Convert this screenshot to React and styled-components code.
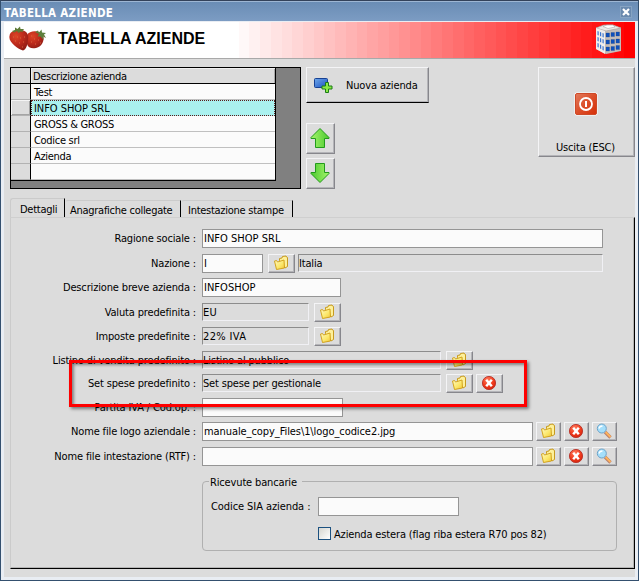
import React from "react";
import styled, { createGlobalStyle, css } from "styled-components";

const companies = ["Test", "INFO SHOP SRL", "GROSS & GROSS", "Codice srl", "Azienda", ""];

const BANDS = 38;
const bands = Array.from({ length: BANDS }, (_, i) => {
  const c = Math.round(255 * (1 - i / (BANDS - 1)));
  const from = ((i / BANDS) * 100).toFixed(2);
  const to = (((i + 1) / BANDS) * 100).toFixed(2);
  return `rgb(255, ${c}, ${c}) ${from}% ${to}%`;
}).join(", ");

const App = () => {
  return (
    <Window>
      <GlobalStyle />
      <TitleBar>
        <TitleText>TABELLA AZIENDE</TitleText>
        <CloseButton>
          <CloseIcon />
        </CloseButton>
      </TitleBar>
      <Content>
        <Banner>
          <Strawberries />
          <Heading>TABELLA AZIENDE</Heading>
          <Building />
        </Banner>
        <Toolbar>
          <GridBox>
            <Grid>
              <GridRow>
                <RowHead $header />
                <HeadCell>Descrizione azienda</HeadCell>
              </GridRow>
              {companies.map((name, i) => (
                <GridRow key={i}>
                  <RowHead $active={i === 1} />
                  <Cell $active={i === 1}>{name}</Cell>
                </GridRow>
              ))}
            </Grid>
          </GridBox>
          <Actions>
            <NewButton>
              <AddIcon />
              <NewText>Nuova azienda</NewText>
            </NewButton>
            <ArrowButton>
              <ArrowIcon />
            </ArrowButton>
            <ArrowButton $second>
              <ArrowIcon $down />
            </ArrowButton>
          </Actions>
          <ExitButton>
            <PowerIcon />
            <span>Uscita (ESC)</span>
          </ExitButton>
        </Toolbar>
        <Tabs>
          <Tab $active $width={55}>Dettagli</Tab>
          <Tab $width={116}>Anagrafiche collegate</Tab>
          <Tab $width={112} $inset={6}>Intestazione stampe</Tab>
        </Tabs>
        <Panel>
          <Field label="Ragione sociale :" top={11}>
            <Input $width={401} $caps>INFO SHOP SRL</Input>
          </Field>
          <Field label="Nazione :" top={6}>
            <Input $width={61}>I</Input>
            <IconButton $left={5}><FolderIcon /></IconButton>
            <ReadOnly $width={305} $left={3}>Italia</ReadOnly>
          </Field>
          <Field label="Descrizione breve azienda :" top={5}>
            <Input $width={139} $caps>INFOSHOP</Input>
          </Field>
          <Field label="Valuta predefinita :" top={6}>
            <ReadOnly $width={107} $caps>EU</ReadOnly>
            <IconButton $left={5}><FolderIcon /></IconButton>
          </Field>
          <Field label="Imposte predefinite :" top={5}>
            <ReadOnly $width={107} $caps>22% IVA</ReadOnly>
            <IconButton $left={5}><FolderIcon /></IconButton>
          </Field>
          <Field label="Listino di vendita predefinito :" top={5}>
            <ReadOnly $width={239}>Listino al pubblico</ReadOnly>
            <IconButton $left={5}><FolderIcon /></IconButton>
          </Field>
          <Field label="Set spese predefinito :" top={4}>
            <ReadOnly $width={239}>Set spese per gestionale</ReadOnly>
            <IconButton $left={5}><FolderIcon /></IconButton>
            <IconButton $left={3}><DeleteIcon /></IconButton>
          </Field>
          <Field label="Partita IVA / Cod.op. :" top={5}>
            <Input $width={141} />
          </Field>
          <Field label="Nome file logo aziendale :" top={5}>
            <Input $width={331}>manuale_copy_Files\1\logo_codice2.jpg</Input>
            <FileButtons />
          </Field>
          <Field label="Nome file intestazione (RTF) :" top={6}>
            <Input $width={331} />
            <FileButtons />
          </Field>
          <Group>
            <Legend>Ricevute bancarie</Legend>
            <GroupRow>
              <GroupLabel>Codice SIA azienda :</GroupLabel>
              <Input $width={141} />
            </GroupRow>
            <CheckRow>
              <CheckBox />
              Azienda estera (flag riba estera R70 pos 82)
            </CheckRow>
          </Group>
        </Panel>
      </Content>
      <Highlight />
    </Window>
  );
};

const Field = ({ label, top, children }) => (
  <Row $top={top}>
    <Label>{label}</Label>
    {children}
  </Row>
);

const FileButtons = () => (
  <>
    <IconButton $left={3} $small><FolderIcon /></IconButton>
    <IconButton $left={3} $small><DeleteIcon /></IconButton>
    <IconButton $left={3} $small><SearchIcon /></IconButton>
  </>
);

const CloseIcon = () => (
  <svg width="8" height="8" viewBox="0 0 8 8">
    <path d="M1 1L7 7M7 1L1 7" stroke="#fff" strokeWidth="2.2" />
  </svg>
);

const Strawberries = () => (
  <svg width="38" height="26" viewBox="0 0 38 26">
    <defs>
      <radialGradient id="berry" cx=".35" cy=".3" r=".8">
        <stop offset="0" stopColor="#dc4526" />
        <stop offset=".5" stopColor="#bd2a1c" />
        <stop offset="1" stopColor="#8a1a14" />
      </radialGradient>
    </defs>
    <path d="M18 9C21 4 30 4 34 9C36 14 33 21 27 22C23 23 19 22 18 18Z" fill="url(#berry)" />
    <path d="M.5 10C1 5 6 4 11 4C17 4 20 8 19 13C19 18 17 24 14 24.500C9 23 -1 16 .5 10Z" fill="url(#berry)" />
    <path d="M3 5L6 4L6 1.500L8.500 3L11 .5L11.500 3L15 3L13.500 5L15 6L11.500 5.500L9.500 7L8 5L5 6.500Z" fill="#5d7a35" />
    <path d="M26 6L29 4.500L30 6.500L32.500 3.500L33 6.500L37 7L35 8.500L37 12L34 10.500L34.500 14L31.500 10.500L28.500 10.500L30 8Z" fill="#5d7f3c" />
    <path
      d="M4 11h1M8 11h1M6 15h1M11 12h1M10 17h1M15 11h1M14 16h1M13 21h1M22 10h1M25 13h1M22 16h1M29 14h1M26 18h1M31 17h1"
      stroke="#d9653f"
      strokeWidth="1"
    />
  </svg>
);

const Building = () => (
  <BuildingSvg width="28" height="31" viewBox="0 0 28 31">
    <path d="M1 4L9 1L18 1L26 4L26 27L11 30L1 25Z" fill="#c3bdb9" />
    <path d="M1 4L9 1L18 1L26 4L11 7Z" fill="#ece9e6" stroke="#aaa39f" strokeWidth=".7" />
    <path d="M8 2.500L12 1H18L20 3L13 4.500Z" fill="#fff" stroke="#aaa" strokeWidth=".6" />
    <path d="M1 4L10 7V30L1 25Z" fill="#efedeb" />
    <g fill="#0d50bd" stroke="#29487e" strokeWidth=".3">
      <path d="M11 9h3.500v4h-3.500zM16 8.500h3.500v4h-3.500zM21 8h3.500v4h-3.500z" />
      <path d="M11 16h3.500v4h-3.500zM16 15.500h3.500v4h-3.500zM21 15h3.500v4h-3.500z" />
      <path d="M11 23h3.500v4h-3.500zM16 22.500h3.500v4h-3.500zM21 21.500h3.500v4h-3.500z" />
    </g>
    <g fill="#3a74cf">
      <path d="M2.500 7l1.200.5v4l-1.200-.5zM5 8l1.200.5v4l-1.200-.5zM7.500 9l1.200.5v4l-1.200-.5z" />
      <path d="M2.500 13l1.200.5v4l-1.200-.5zM5 14l1.200.5v4l-1.200-.5zM7.500 15l1.200.5v4l-1.200-.5z" />
      <path d="M2.500 19l1.200.5v4l-1.200-.5zM5 20.500l1.200.5v4l-1.200-.5zM7.500 22l1.200.5v4l-1.200-.5z" />
    </g>
  </BuildingSvg>
);

const AddIcon = () => (
  <svg width="20" height="16" viewBox="0 0 20 16">
    <defs>
      <linearGradient id="screen" x1="0" y1="0" x2="1" y2="1">
        <stop offset="0" stopColor="#6fa8ea" />
        <stop offset="1" stopColor="#1b52c2" />
      </linearGradient>
    </defs>
    <rect x=".5" y="1.500" width="13" height="9" rx="1" fill="url(#screen)" stroke="#174193" />
    <path d="M11.500 5.500h3v3.500h3.500v3h-3.500v3.500h-3v-3.500h-3.500v-3h3.500z" fill="#8bea45" stroke="#1c7d17" />
  </svg>
);

const ArrowIcon = ({ $down }) => (
  <svg width="22" height="22" viewBox="0 0 22 22">
    <defs>
      <linearGradient id="leaf" x1="0" x2="1">
        <stop offset="0" stopColor="#a4f56c" />
        <stop offset="1" stopColor="#4cc92e" />
      </linearGradient>
    </defs>
    <path
      d="M11 1.500L20 10.500V11.500H15.500V20.500H6.500V11.500H2V10.500Z"
      transform={$down ? "rotate(180 11 11)" : undefined}
      fill="url(#leaf)"
      stroke="#229a1b"
    />
  </svg>
);

const PowerIcon = () => (
  <svg width="24" height="24" viewBox="0 0 24 24">
    <defs>
      <linearGradient id="power" x1="0" y1="0" x2="1" y2="1">
        <stop offset="0" stopColor="#e27b5d" />
        <stop offset=".5" stopColor="#dc4f2a" />
        <stop offset="1" stopColor="#d62f08" />
      </linearGradient>
    </defs>
    <rect x=".5" y=".5" width="23" height="23" rx="2" fill="#fff" />
    <rect x="1.500" y="1.500" width="21" height="21" rx="1.500" fill="url(#power)" stroke="#cf4a28" />
    <circle cx="12" cy="12" r="6" fill="none" stroke="#fff" strokeWidth="1.800" />
    <path d="M12 9V15" stroke="#fff" strokeWidth="2" />
  </svg>
);

const FolderIcon = () => (
  <svg width="16" height="16" viewBox="0 0 16 16">
    <defs>
      <linearGradient id="folder" x1="0" y1="0" x2="1" y2="1">
        <stop offset="0" stopColor="#fffbc4" />
        <stop offset=".6" stopColor="#fbe667" />
        <stop offset="1" stopColor="#f0c23a" />
      </linearGradient>
    </defs>
    <path
      d="M6.500 5.500V3.500L9 3L9.500 1.500L13 1L13.500 2L14.500 2.500V11.500L12 13Z"
      fill="#fdf09a"
      stroke="#c3920f"
      strokeWidth=".9"
    />
    <path
      d="M1.500 6L3.500 5.500L4.500 7L11 5L11.500 13L3.500 14.500Z"
      fill="url(#folder)"
      stroke="#cf9c12"
      strokeWidth=".9"
    />
  </svg>
);

const DeleteIcon = () => (
  <svg width="16" height="16" viewBox="0 0 16 16">
    <defs>
      <radialGradient id="stop" cx=".4" cy=".25" r=".8">
        <stop offset="0" stopColor="#ff7a5c" />
        <stop offset=".6" stopColor="#f03a1c" />
        <stop offset="1" stopColor="#d3230c" />
      </radialGradient>
    </defs>
    <circle cx="8" cy="8" r="6.600" fill="url(#stop)" stroke="#b8322a" strokeWidth=".9" />
    <path d="M5.200 4.800L10.800 11.200M10.800 4.800L5.200 11.200" stroke="#fff" strokeWidth="2.500" />
  </svg>
);

const SearchIcon = () => (
  <svg width="16" height="16" viewBox="0 0 16 16">
    <path d="M9 9L14.500 14.500" stroke="#b9816d" strokeWidth="3.400" />
    <path d="M9.500 9L14.500 14" stroke="#ffb25a" strokeWidth="1.800" />
    <circle cx="5.800" cy="5.500" r="4.500" fill="#a5dffb" stroke="#6fa3c8" />
    <path d="M3 5.500Q3.500 3 6.500 3" stroke="#fff" strokeWidth="1.300" fill="none" />
  </svg>
);

export default App;

const GlobalStyle = createGlobalStyle`
  * {
    box-sizing: border-box;
  }
  body {
    margin: 0;
    overflow: hidden;
  }
  svg {
    display: block;
    flex: none;
  }
`;

const raised = css`
  background: #dcdcdc;
  border: 1px solid;
  border-color: #f4f4f6 #87878c #87878c #f4f4f6;
  box-shadow: inset -1px -1px 0 #b4b4b8;
`;

const Window = styled.div`
  position: relative;
  width: 639px;
  height: 581px;
  display: flex;
  flex-direction: column;
  border: 1px solid #34506f;
  border-top-color: #33425a;
  background: #e9edf3;
  color: #000;
  font-family: "DejaVu Sans Condensed", "DejaVu Sans", sans-serif;
  font-stretch: condensed;
  font-size: 11px;
  letter-spacing: -0.15px;
  line-height: 13px;
  white-space: nowrap;
`;

const TitleBar = styled.div`
  height: 20px;
  padding: 3px 6px 0 3px;
  display: flex;
  justify-content: space-between;
  border-top: 1px solid #9db6d3;
  background: linear-gradient(#6a8db5, #7c9cc3);
`;

const TitleText = styled.div`
  padding-top: 2px;
  color: #fff;
  font-size: 11.5px;
  font-weight: bold;
  letter-spacing: 0.3px;
`;

const CloseButton = styled.div`
  width: 12px;
  height: 12px;
  margin-top: 1px;
  display: flex;
  align-items: center;
  justify-content: center;
  border: 1px solid #86a3c2;
  background: #6989ae;
`;

const Content = styled.div`
  flex: 1;
  margin: 1px 3px 3px 3px;
  background: #dcdcdc;
`;

const Banner = styled.div`
  height: 37px;
  padding: 4px 12px 0 5px;
  display: flex;
  align-items: flex-start;
  border-bottom: 1px solid #a9a9a9;
  background: linear-gradient(to right, ${bands}) right / 407px 100% no-repeat #fff;
`;

const BuildingSvg = styled.svg`
  margin-top: -2px;
`;

const Heading = styled.h1`
  flex: 1;
  margin: 3px 0 0 11px;
  font: bold 16px/20px "Liberation Sans", Arial, sans-serif;
  letter-spacing: 0.02px;
`;

const Toolbar = styled.div`
  display: flex;
  align-items: flex-start;
  height: 139px;
  padding: 8px 0 0 6px;
`;

const GridBox = styled.div`
  width: 291px;
  height: 122px;
  border: 1px solid #000;
  background: #808080;
  letter-spacing: -0.3px;
`;

const Grid = styled.div`
  width: 265px;
  border-right: 1px solid #000;
  border-bottom: 1px solid #000;
`;

const GridRow = styled.div`
  display: flex;
  height: 16px;
`;

const RowHead = styled.div`
  width: 20px;
  background: #dcdcdc;
  border-right: 1px solid #000;
  border-bottom: 1px solid ${p => (p.$header ? "#000" : "#b2b2b2")};
  box-shadow: ${p => (p.$active ? "inset 1px 1px 0 #f4f4f4, inset -1px -1px 0 #a4a4a4" : "none")};
`;

const HeadCell = styled.div`
  flex: 1;
  padding: 2px 2px 0;
  background: #dcdcdc;
  border-bottom: 1px solid #000;
  box-shadow: inset 1px 1px 0 #f0f0f0, inset -1px 0 0 #a8a8a8;
`;

const Cell = styled.div`
  flex: 1;
  padding: 3px 3px 0;
  line-height: 12px;
  background: #fbfbfb;
  border-bottom: 1px solid #c0c0c0;
  ${p =>
    p.$active &&
    css`
      padding: 2px 2px 0;
      background: #aaf1ef;
      border: 1px dotted #5a1a1a;
      letter-spacing: -0.05px;
    `}
`;

const Actions = styled.div`
  margin-left: 5px;
`;

const NewButton = styled.div`
  ${raised}
  width: 123px;
  height: 36px;
  padding-left: 7px;
  display: flex;
  align-items: center;
  border-bottom-color: #000;
`;

const NewText = styled.span`
  margin-left: 12px;
`;

const ArrowButton = styled.div`
  ${raised}
  width: 29px;
  height: 31px;
  margin-top: ${p => (p.$second ? 4 : 20)}px;
  padding: 0 1px 2px 0;
  display: flex;
  align-items: center;
  justify-content: center;
`;

const ExitButton = styled.div`
  ${raised}
  width: 97px;
  height: 90px;
  margin-left: auto;
  padding: 24px 2px 0 0;
  display: flex;
  flex-direction: column;
  align-items: center;
  gap: 25px;
`;

const Tabs = styled.div`
  display: flex;
  align-items: flex-end;
  height: 19px;
  padding-left: 6px;
  letter-spacing: -0.27px;
`;

const Tab = styled.div`
  width: ${p => p.$width}px;
  height: ${p => (p.$active ? 19 : 17)}px;
  padding: ${p => (p.$active ? "4px 0 0 9px" : `3px 0 0 ${p.$inset || 4}px`)};
  border-top: 1px solid #cbcbcb;
  border-left: 1px solid ${p => (p.$active ? "#cbcbcb" : "transparent")};
  border-right: 1px solid #000;
  border-top-left-radius: 3px;
`;

const Panel = styled.div`
  height: 352px;
  margin-left: 6px;
  border: 1px solid;
  border-color: #cfcfcf #000 #000 #cbcbcb;
  box-shadow: inset -1px -1px 0 #b4b4b4;
`;

const Row = styled.div`
  display: flex;
  height: 19px;
  margin-top: ${p => p.$top}px;
`;

const Label = styled.div`
  width: 191px;
  padding: 3px 6px 0 0;
  text-align: right;
`;

const Input = styled.div`
  width: ${p => p.$width}px;
  height: 19px;
  padding: 3px 1px;
  line-height: 12px;
  border: 1px solid #959595;
  background: #fbfbfb;
  letter-spacing: ${p => (p.$caps ? 0.02 : -0.08)}px;
`;

const ReadOnly = styled.div`
  width: ${p => p.$width}px;
  height: 18px;
  margin-left: ${p => p.$left || 0}px;
  padding: 2px 0;
  border: 1px solid;
  border-color: #8c8c8c #f0f0f4 #f0f0f4 #8c8c8c;
  letter-spacing: ${p => (p.$caps ? 0.35 : -0.18)}px;
`;

const IconButton = styled.div`
  ${raised}
  width: ${p => (p.$small ? 25 : 27)}px;
  height: 19px;
  margin-left: ${p => p.$left}px;
  padding: 0 1px 1px 0;
  display: flex;
  align-items: center;
  justify-content: center;
`;

const Group = styled.fieldset`
  width: 415px;
  height: 76px;
  margin: 9px 0 0 191px;
  padding: 9px 0 0 8px;
  border: 1px solid #b0b0b0;
  border-radius: 4px;
`;

const Legend = styled.legend`
  height: 13px;
  margin-left: -2px;
  padding: 1px 5px 0 1px;
`;

const GroupRow = styled.div`
  display: flex;
`;

const GroupLabel = styled.div`
  width: 107px;
  padding-top: 3px;
  letter-spacing: -0.08px;
`;

const CheckRow = styled.div`
  display: flex;
  align-items: flex-start;
  gap: 3px;
  margin: 11px 0 0 107px;
  line-height: 15px;
`;

const CheckBox = styled.span`
  width: 13px;
  height: 13px;
  border: 1px solid #1c5180;
  background: linear-gradient(135deg, #d6d6d0, #fff);
`;

const Highlight = styled.div`
  position: absolute;
  left: 68px;
  top: 359px;
  width: 458px;
  height: 47px;
  border: 3px solid #fe0000;
  box-shadow: 2px 2px 3px rgba(0, 0, 0, 0.45), inset 2px 2px 3px rgba(0, 0, 0, 0.4);
`;
